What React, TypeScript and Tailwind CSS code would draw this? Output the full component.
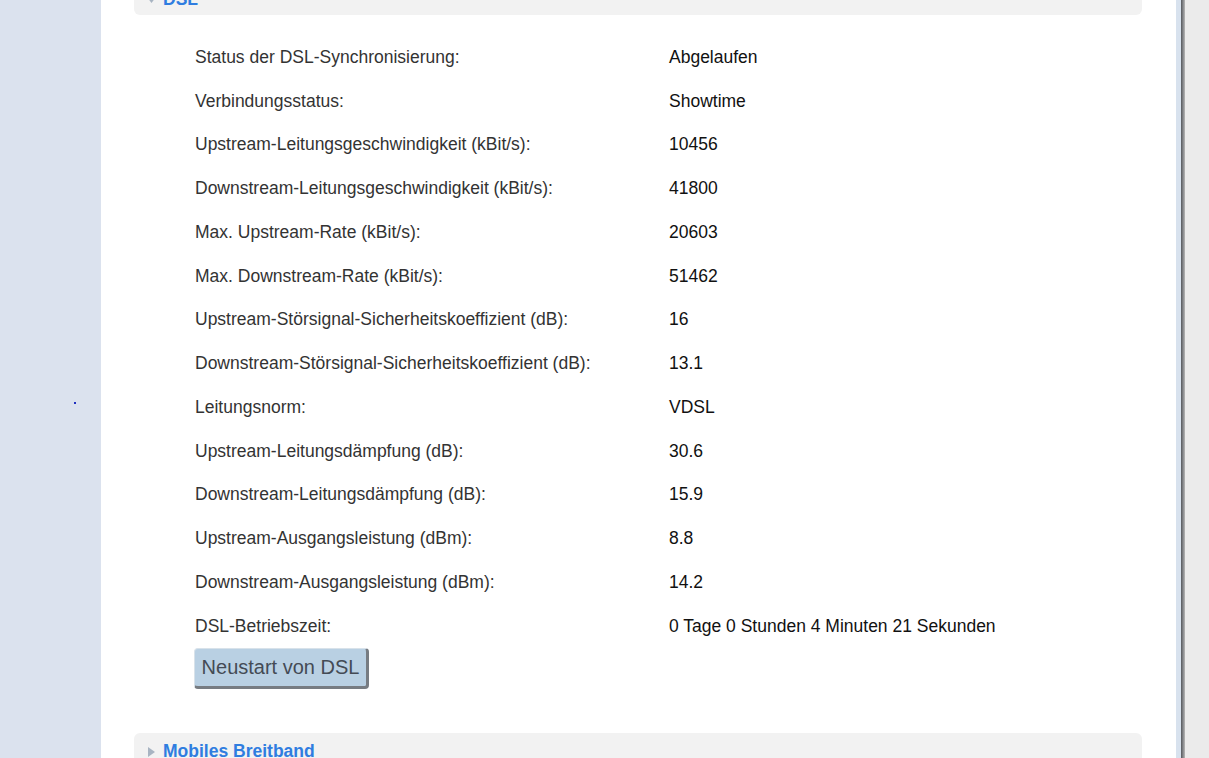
import React from 'react'

const rows: [string, string][] = [
  ['Status der DSL-Synchronisierung:', 'Abgelaufen'],
  ['Verbindungsstatus:', 'Showtime'],
  ['Upstream-Leitungsgeschwindigkeit (kBit/s):', '10456'],
  ['Downstream-Leitungsgeschwindigkeit (kBit/s):', '41800'],
  ['Max. Upstream-Rate (kBit/s):', '20603'],
  ['Max. Downstream-Rate (kBit/s):', '51462'],
  ['Upstream-Störsignal-Sicherheitskoeffizient (dB):', '16'],
  ['Downstream-Störsignal-Sicherheitskoeffizient (dB):', '13.1'],
  ['Leitungsnorm:', 'VDSL'],
  ['Upstream-Leitungsdämpfung (dB):', '30.6'],
  ['Downstream-Leitungsdämpfung (dB):', '15.9'],
  ['Upstream-Ausgangsleistung (dBm):', '8.8'],
  ['Downstream-Ausgangsleistung (dBm):', '14.2'],
  ['DSL-Betriebszeit:', '0 Tage 0 Stunden 4 Minuten 21 Sekunden'],
]

function Triangle({ open }: { open?: boolean }) {
  return (
    <svg width="9" height="10" viewBox="0 0 9 10" className="shrink-0">
      {open ? (
        <polygon points="0,2 9,2 4.5,8" fill="#a8b4c2" />
      ) : (
        <polygon points="1,0 8,5 1,10" fill="#a8b4c2" />
      )}
    </svg>
  )
}

export default function App() {
  return (
    <div
      className="flex w-[1209px] h-[758px] overflow-hidden bg-white"
      style={{ fontFamily: '"Liberation Sans", Arial, sans-serif' }}
    >
      {/* sidebar */}
      <div className="w-[101px] shrink-0 bg-[#dbe2ee] flex flex-col items-start pt-[402px] pl-[74px]">
        <span className="w-[2px] h-[2px] bg-[#2030c0]" />
      </div>

      {/* main */}
      <div className="w-[1075px] shrink-0 bg-white pl-[33px] pr-[34px]">
        <div className="-mt-[15px] h-[30px] bg-[#f2f2f2] rounded-[6px] flex items-center gap-[7px] pl-[13px]">
          <Triangle open />
          <span className="text-[17.5px] font-bold text-[#2f7de0] leading-none">DSL</span>
        </div>

        <div className="pt-[20px] pl-[61px]">
          {rows.map(([label, value]) => (
            <div key={label} className="flex items-center h-[43.77px] text-[17.5px]">
              <span className="w-[474px] text-[#333333]">{label}</span>
              <span className="text-[#111111]">{value}</span>
            </div>
          ))}
          <button className="h-[41px] w-[175px] -ml-[1px] bg-[#b9d0e3] rounded-[4px] text-[20px] text-[#444b55] border-r-[3px] border-b-[3px] border-[#777c82] border-t border-l border-t-[#d8e2ea] border-l-[#d8e2ea] pb-[1px]">
            Neustart von DSL
          </button>
        </div>

        <div className="mt-[44px] h-[32px] bg-[#f2f2f2] rounded-t-[6px] flex items-center gap-[7px] pl-[13px] pt-[6px]">
          <Triangle />
          <span className="text-[17.5px] font-bold text-[#2f7de0] leading-none">Mobiles Breitband</span>
        </div>
      </div>

      {/* right edge */}
      <div className="w-[5px] shrink-0 bg-[#d8e2ee]" />
      <div className="w-[4px] shrink-0 bg-gradient-to-r from-[#55595e] to-[#b8b8b8]" />
      <div className="flex-1 bg-[#ebebeb]" />
    </div>
  )
}
